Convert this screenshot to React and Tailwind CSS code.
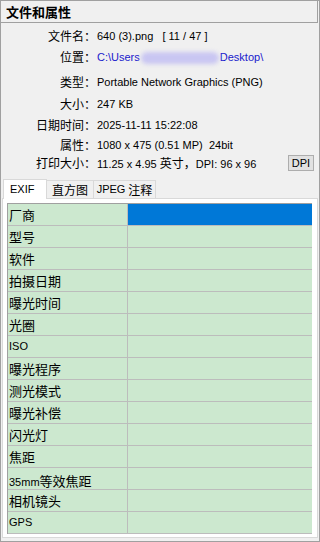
import React from "react";

const cjk = { fontFamily: '"Noto Sans CJK SC", "Liberation Sans", sans-serif' };
const latin = { fontFamily: '"Liberation Sans", "Noto Sans CJK SC", sans-serif' };

const info = [
  { label: "文件名：", value: <span>640 (3).png&nbsp;&nbsp;&nbsp;[ 11 / 47 ]</span>, mt: "mt-[5px]" },
  {
    label: "位置：",
    value: (
      <span className="text-[#1a1acc]">
        C:\Users
        <span className="mx-[1px] inline-block h-[12px] w-[78px] align-middle rounded-full bg-[#c9c6f2] blur-[2px]" />
        Desktop\
      </span>
    ),
    mt: "mt-[5px]",
  },
  { label: "类型：", value: "Portable Network Graphics (PNG)", mt: "mt-[9px]" },
  { label: "大小：", value: "247 KB", mt: "mt-[6px]" },
  { label: "日期时间：", value: "2025-11-11 15:22:08", mt: "mt-[5px]" },
  { label: "属性：", value: "1080 x 475 (0.51 MP)  24bit", mt: "mt-[4px]" },
];

const rows = [
  "厂商",
  "型号",
  "软件",
  "拍摄日期",
  "曝光时间",
  "光圈",
  "ISO",
  "曝光程序",
  "测光模式",
  "曝光补偿",
  "闪光灯",
  "焦距",
  "35mm等效焦距",
  "相机镜头",
  "GPS",
];

const RowLabel = ({ text }) => {
  if (text === "ISO" || text === "GPS") {
    return (
      <span className="text-[11px]" style={latin}>
        {text}
      </span>
    );
  }
  if (text.startsWith("35mm")) {
    return (
      <span>
        <span className="text-[11px]" style={latin}>
          35mm
        </span>
        <span className="text-[13px]">等效焦距</span>
      </span>
    );
  }
  return <span className="text-[13px]">{text}</span>;
};

export default function App() {
  return (
    <div className="relative h-[542px] w-[320px] overflow-hidden border border-[#a0a0a0] bg-[#f0f0f0] text-black" style={cjk}>
      <div className="flex h-[22px] w-[317px] items-center border-b border-r border-[#a0a0a0] pl-[5px] text-[13px] font-bold">
        文件和属性
      </div>

      <div className="flex flex-col">
        {info.map((row) => (
          <div key={row.label} className={`flex h-[16px] items-center ${row.mt}`}>
            <div className="w-[95px] shrink-0 text-right text-[12px]">{row.label}</div>
            <div className="ml-[1px] whitespace-pre text-[11px]" style={latin}>
              {row.value}
            </div>
          </div>
        ))}
        <div className="mt-[2px] flex h-[16px] items-center">
          <div className="w-[95px] shrink-0 text-right text-[12px]">打印大小：</div>
          <div className="ml-[1px] flex-1 whitespace-pre text-[11px]" style={latin}>
            11.25 x 4.95 <span className="text-[12px]" style={cjk}>英寸，</span>DPI: 96 x 96
          </div>
          <button
            className="mr-[5px] flex h-[16px] w-[26px] items-center justify-center border border-[#adadad] bg-[#e1e1e1] text-[11px]"
            style={latin}
          >
            DPI
          </button>
        </div>
      </div>

      <div className="mt-[8px] flex h-[19px] items-end pl-[2px]">
        <div className="relative z-10 -mb-[1px] flex h-[20px] w-[44px] items-center border border-b-0 border-[#d9d9d9] bg-white pl-[6px] text-[11px]" style={latin}>
          EXIF
        </div>
        <div className="flex h-[18px] w-[47px] items-center justify-center border border-l-0 border-b-0 border-[#d9d9d9] bg-[#f0f0f0] text-[12px]">
          直方图
        </div>
        <div className="flex h-[18px] w-[62px] items-center justify-center border border-l-0 border-b-0 border-[#d9d9d9] bg-[#f0f0f0] text-[12px]">
          <span className="text-[11px]" style={latin}>
            JPEG
          </span>
          <span className="ml-[3px]">注释</span>
        </div>
      </div>

      <div className="ml-[1px] h-[340px] w-[316px] border border-[#d9d9d9] bg-white pl-[4px] pt-[4px]">
        <div className="w-[305px] border-l border-t border-[#a0a0a0] bg-[#cce8cf]">
          {rows.map((r, i) => (
            <div key={r} className="flex h-[22px] border-b border-[#bcbcbc]">
              <div className="flex w-[120px] items-center border-r border-[#bcbcbc] pl-[1px]">
                <RowLabel text={r} />
              </div>
              <div className={`flex-1 ${i === 0 ? "bg-[#0078d7]" : ""}`} />
            </div>
          ))}
        </div>
      </div>
    </div>
  );
}
